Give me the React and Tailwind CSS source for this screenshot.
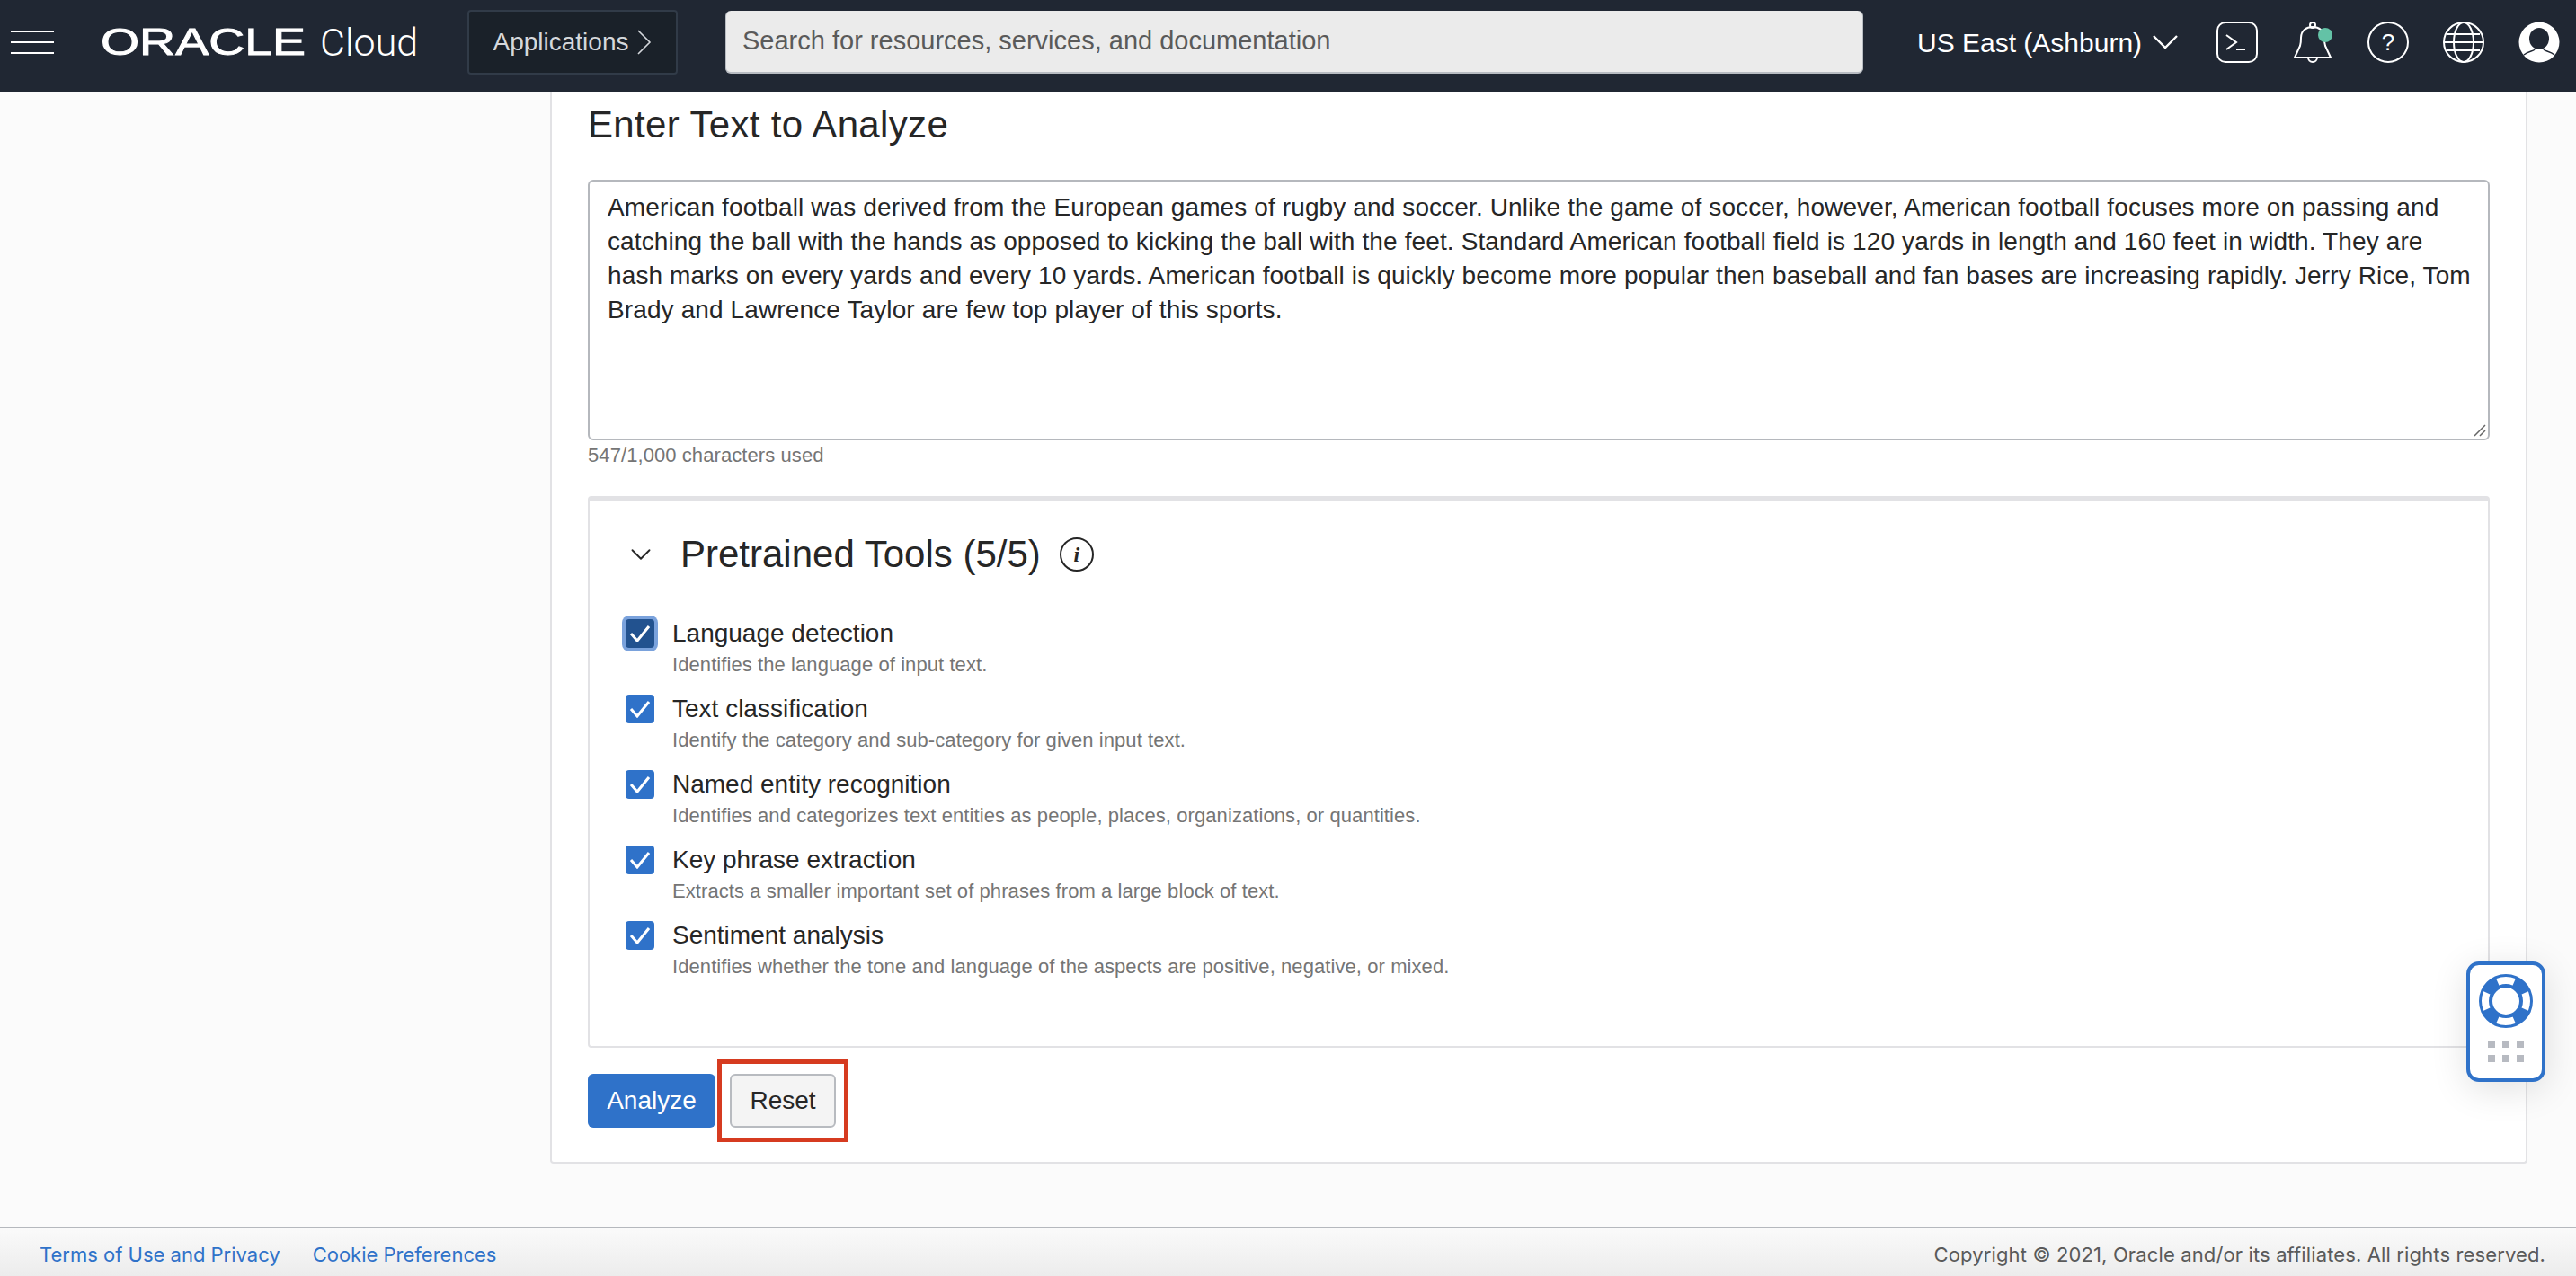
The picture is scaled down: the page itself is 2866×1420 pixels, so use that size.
import React from 'react';
import { ChevronDown } from 'lucide-react';

const sans = 'font-["Liberation_Sans",Arial,sans-serif]';

const tools = [
  { label: 'Language detection', desc: 'Identifies the language of input text.', focused: true },
  { label: 'Text classification', desc: 'Identify the category and sub-category for given input text.' },
  { label: 'Named entity recognition', desc: 'Identifies and categorizes text entities as people, places, organizations, or quantities.' },
  { label: 'Key phrase extraction', desc: 'Extracts a smaller important set of phrases from a large block of text.' },
  { label: 'Sentiment analysis', desc: 'Identifies whether the tone and language of the aspects are positive, negative, or mixed.' },
];

function Logo() {
  return (
    <div className="flex items-center ml-[52px] mb-[8px] w-[352px] shrink-0">
      <div className="w-[230px] shrink-0">
        <span className="inline-block origin-left scale-x-[1.32] text-[42px] leading-none text-white [-webkit-text-stroke:0.9px_white]">ORACLE</span>
      </div>
      <span className='ml-[14px] text-[43px] leading-none font-light text-white font-["Roboto",sans-serif]'>Cloud</span>
    </div>
  );
}

function TerminalIcon() {
  return (
    <svg width="46" height="46" viewBox="0 0 46 46" fill="none" stroke="#fff" strokeWidth="2">
      <rect x="1" y="1" width="44" height="44" rx="9" />
      <path d="M11 15l11 8-11 8M22 31h10" />
    </svg>
  );
}

function BellIcon() {
  return (
    <svg width="46" height="48" viewBox="0 0 46 48" fill="none">
      <path d="M3 41L9 28C10 25 10 22 10 19C10 11 16 7 23 7C30 7 36 11 36 19C36 22 36 25 37 28L43 41Z" stroke="#fff" strokeWidth="2" strokeLinejoin="round" />
      <circle cx="23" cy="5" r="3" stroke="#fff" strokeWidth="2" />
      <path d="M18 41a5 5 0 0 0 10 0" stroke="#fff" strokeWidth="2" />
      <circle cx="37" cy="16" r="8" fill="#63c2a6" />
    </svg>
  );
}

function HelpIcon() {
  return (
    <div className="w-[46px] h-[46px] rounded-full border-2 border-white flex items-center justify-center text-white text-[26px] leading-none">?</div>
  );
}

function GlobeIcon() {
  return (
    <svg width="46" height="46" viewBox="0 0 46 46" fill="none" stroke="#fff" strokeWidth="2">
      <circle cx="23" cy="23" r="22" />
      <ellipse cx="23" cy="23" rx="11" ry="22" />
      <path d="M1 23h44M5 14h36M5 32h36" />
    </svg>
  );
}

function AvatarIcon() {
  return (
    <svg width="46" height="46" viewBox="0 0 46 46" fill="none">
      <circle cx="23" cy="23" r="22.5" fill="#fff" />
      <ellipse cx="23" cy="19" rx="11" ry="12" fill="#202733" />
      <path d="M6 37C11 33 17 33 18 31M40 37C35 33 29 33 28 31" stroke="#202733" strokeWidth="1.5" />
    </svg>
  );
}

function Header() {
  return (
    <header className={`h-[102px] shrink-0 bg-[#202733] flex items-center ${sans}`}>
      <div className="ml-3 mb-[8px] w-12 flex flex-col gap-[10px] shrink-0">
        <div className="h-[2px] bg-white" />
        <div className="h-[2px] bg-white" />
        <div className="h-[2px] bg-white" />
      </div>
      <Logo />
      <button className="ml-[56px] mb-[8px] w-[234px] h-[72px] shrink-0 bg-[#1a2129] border-2 border-[#313b48] rounded flex items-center justify-center gap-[10px] text-[28px] text-[#d5d8dc]">
        Applications
        <svg width="16" height="28" viewBox="0 0 16 28" fill="none" stroke="#d5d8dc" strokeWidth="1.6">
          <path d="M1 1l13 13L1 27" />
        </svg>
      </button>
      <div className="ml-[53px] mb-[8px] w-[1266px] h-[70px] shrink-0 bg-[#ebebeb] rounded-md border-b-2 border-x border-[#b8bcc2] flex items-center px-[18px] text-[29px] text-[#5a5a5a]">
        Search for resources, services, and documentation
      </div>
      <div className="ml-[60px] mb-[8px] flex items-center gap-[12px] text-[30px] text-white whitespace-nowrap">
        US East (Ashburn)
        <svg width="28" height="16" viewBox="0 0 28 16" fill="none" stroke="#fff" strokeWidth="2.4">
          <path d="M1 1l13 13L27 1" />
        </svg>
      </div>
      <div className="ml-auto mr-[18px] mb-[8px] flex items-center gap-[38px]">
        <TerminalIcon />
        <BellIcon />
        <HelpIcon />
        <GlobeIcon />
        <AvatarIcon />
      </div>
    </header>
  );
}

function ToolRow({ label, desc, focused }) {
  return (
    <div className="flex h-[84px]">
      <div className="w-[52px] shrink-0">
        <div className={`w-8 h-8 rounded flex items-center justify-center ${focused ? 'bg-[#22528f] ring-4 ring-[#7aa2dc]' : 'bg-[#2f72c9]'}`}>
          <svg width="24" height="20" viewBox="0 0 24 20" fill="none" stroke="#fff" strokeWidth="3">
            <path d="M2 10l7 8L22 2" />
          </svg>
        </div>
      </div>
      <div>
        <div className="text-[28px] leading-[32px] text-[#262626]">{label}</div>
        <div className="mt-[5px] text-[22px] leading-[28px] tracking-[0.08px] text-[#757575]">{desc}</div>
      </div>
    </div>
  );
}

function SupportWidget() {
  return (
    <div className="fixed right-[34px] top-[1070px] w-[88px] h-[134px] bg-white border-4 border-[#2f72c9] rounded-[14px] shadow-[0_8px_40px_rgba(0,0,0,0.12)] flex flex-col items-center pt-[10px]">
      <svg width="60" height="60" viewBox="0 0 60 60">
        <circle cx="30" cy="30" r="28.5" fill="none" stroke="#2f72c9" strokeWidth="3" />
        {[45, 135, 225, 315].map((a) => (
          <polygon key={a} points="24,15 36,15 41,2 19,2" fill="#2f72c9" transform={`rotate(${a} 30 30)`} />
        ))}
        <circle cx="30" cy="30" r="17" fill="#fff" stroke="#2f72c9" strokeWidth="4" />
      </svg>
      <div className="mt-[14px] grid grid-cols-3 gap-2">
        {[0, 1, 2, 3, 4, 5].map((i) => <div key={i} className="w-2 h-2 bg-[#b7bac1]" />)}
      </div>
    </div>
  );
}

export default function App() {
  return (
    <div className={`h-[1420px] w-[2866px] overflow-hidden flex flex-col bg-[#fbfbfb] ${sans}`}>
      <Header />

      <main className="flex-1 min-h-0 pl-[612px] pr-[54px]">
        <div className="bg-white border-x-2 border-b-2 border-[#e2e2e5] rounded-b h-[1193px] px-10">
          <h2 className="pt-[14px] text-[42px] leading-[46px] tracking-[0.35px] text-[#262626]">Enter Text to Analyze</h2>

          <div className="relative mt-[38px] h-[290px] border-2 border-[#b5b8bd] rounded-md pl-5 pr-[8px] pt-[10px] text-[28px] leading-[38px] tracking-[0.12px] text-[#262626]">
            American football was derived from the European games of rugby and soccer. Unlike the game of soccer, however, American football focuses more on passing and catching the ball with the hands as opposed to kicking the ball with the feet. Standard American football field is 120 yards in length and 160 feet in width. They are hash marks on every yards and every 10 yards. American football is quickly become more popular then baseball and fan bases are increasing rapidly. Jerry Rice, Tom Brady and Lawrence Taylor are few top player of this sports.
            <svg width="16" height="16" viewBox="0 0 16 16" className="absolute right-[2px] bottom-[2px]" stroke="#666" strokeWidth="1.5">
              <path d="M15 3L3 15M15 9L9 15" />
            </svg>
          </div>
          <div className="mt-[2px] text-[22px] leading-[30px] tracking-[0.08px] text-[#757575]">547/1,000 characters used</div>

          <section className="mt-[30px] h-[614px] border-2 border-t-[6px] border-[#e2e2e5] rounded px-10">
            <div className="flex items-center pt-[32px] h-[86px]">
              <ChevronDown size={38} strokeWidth={1.2} className="ml-[-2px] text-[#262626]" />
              <h3 className="ml-[25px] text-[42px] leading-[48px] text-[#262626]">Pretrained Tools (5/5)</h3>
              <div className="ml-[21px] w-[38px] h-[38px] rounded-full border-2 border-[#262626] flex items-center justify-center font-['Liberation_Serif',serif] italic font-bold text-[24px] text-[#262626]">i</div>
            </div>
            <div className="mt-[45px] flex flex-col">
              {tools.map((t) => <ToolRow key={t.label} {...t} />)}
            </div>
          </section>

          <div className="mt-[13px] flex items-center">
            <button className="w-[142px] h-[60px] bg-[#2f72c9] rounded-md text-white text-[28px]">Analyze</button>
            <div className="ml-[2px] border-[5px] border-[#d63b20] px-[9px] py-[11px]">
              <button className="block w-[118px] h-[60px] bg-[#f4f4f4] border-2 border-[#b8bbc0] rounded-md text-[#262626] text-[28px]">Reset</button>
            </div>
          </div>
        </div>
      </main>

      <footer className='h-[55px] shrink-0 border-t-2 border-[#b5b8bd] bg-gradient-to-b from-[#fafafa] to-[#ececec] flex items-center justify-between pt-[5px] pl-[44px] pr-[34px] text-[22px] font-["Inter",sans-serif]'>
        <div className="flex gap-[36px] text-[#2f72c9]">
          <span>Terms of Use and Privacy</span>
          <span>Cookie Preferences</span>
        </div>
        <span className="tracking-[0.13px] text-[#5a5a5a]">Copyright © 2021, Oracle and/or its affiliates. All rights reserved.</span>
      </footer>

      <SupportWidget />
    </div>
  );
}
